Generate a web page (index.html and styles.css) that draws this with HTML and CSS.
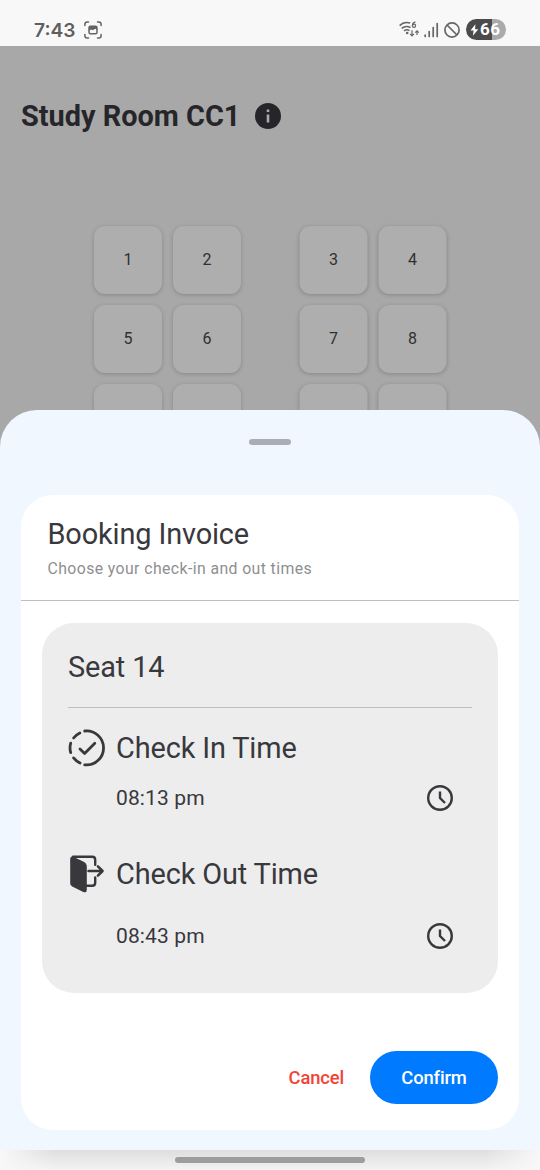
FILE: index.html
```html
<!DOCTYPE html>
<html lang="en">
<head>
<meta charset="utf-8">
<title>Study Room CC1</title>
<link rel="stylesheet" href="styles.css">
</head>
<body>
<div class="phone">
  <header class="status">
    <span class="clock">7:43</span>
    <svg class="shot" width="18" height="18" viewBox="0 0 18 18" fill="none" stroke="#636363" stroke-width="1.5" stroke-linecap="round">
      <path d="M.9 4.4V3.2Q.9.9 3.2.9h1.3M13.5.9h1.3q2.3 0 2.3 2.3v1.2M17.1 13.6v1.2q0 2.3-2.3 2.3h-1.3M4.5 17.1H3.2q-2.3 0-2.3-2.3v-1.2"/>
      <rect x="5" y="5.2" width="8" height="7.6" rx="1.5"/>
      <path d="M5 5.2h8v3.7l-1.8-1.2-2.4 1.6-1.6-.8L5 9.7z" fill="#636363" stroke="none"/>
    </svg>
    <div class="signals">
      <svg width="20" height="17" viewBox="0 0 20 17" fill="none" stroke="#666" stroke-width="1.5">
        <path d="M.6 4.6C3.5 1.7 7.4.8 11.2 2M2.7 7.4c2.7-2.2 5.8-2.5 8.8-.9M5 10c1.8-1.4 3.7-1.5 5.5-.3"/>
        <circle cx="8.2" cy="12" r="1.3" fill="#666" stroke="none"/>
        <path d="M16.4.9c-2.1.7-3 2-3 3.6" stroke-width="1.2"/>
        <circle cx="15" cy="4.7" r="1.6" stroke-width="1.2"/>
        <path d="M13 9.2v5.6m-1.9-1.9 1.9 1.9 1.9-1.9M18 14V9.8m-1.8 1.8L18 9.8l1.8 1.8" stroke-width="1.2"/>
      </svg>
      <svg class="bars" width="15" height="16" viewBox="0 0 15 16" stroke="#666" stroke-width="1.7" stroke-linecap="round">
        <path d="M1.2 13.1v1.4M5.2 9.5v5M9.2 5.6v8.9M13.2 1.5v13"/>
      </svg>
      <svg class="blocked" width="16" height="16" viewBox="0 0 16 16" fill="none" stroke="#666" stroke-width="1.7">
        <circle cx="8" cy="8" r="7.1"/><path d="m3 3 10 10"/>
      </svg>
      <div class="battery">
        <svg width="9" height="12" viewBox="0 0 9 12"><path d="M5.4.2.5 6.6h3.1L2.9 11.8l5.4-6.6H5.1z" fill="#fff"/></svg>
        <span>66</span>
      </div>
    </div>
  </header>

  <main class="room">
    <div class="title">
      <h1>Study Room CC1</h1>
      <svg width="26" height="26" viewBox="0 0 26 26"><circle cx="13" cy="13" r="13" fill="#26262a"/><path d="M11.7 6.5h2.6v2.6h-2.6zM11.7 11.5h2.6v8h-2.6z" fill="#aaa"/></svg>
    </div>
    <div class="seats">
      <div class="seat">1</div><div class="seat">2</div><div class="seat">3</div><div class="seat">4</div>
      <div class="seat">5</div><div class="seat">6</div><div class="seat">7</div><div class="seat">8</div>
      <div class="seat"></div><div class="seat"></div><div class="seat"></div><div class="seat"></div>
    </div>

    <section class="sheet">
      <div class="handle"></div>
      <div class="invoice">
        <div class="invoice-head">
          <h2>Booking Invoice</h2>
          <p>Choose your check-in and out times</p>
        </div>
        <div class="details">
          <h2 class="seat-name">Seat 14</h2>
          <div class="event">
            <svg width="38" height="38" viewBox="0 0 38 38" fill="none" stroke="#38383d" stroke-width="2.8" stroke-linecap="round" stroke-linejoin="round">
              <path d="M16.7 2A17 17 0 1 1 16.7 35.8M12.1 34A17 17 0 0 1 5.6 28.9M2.7 23.6A17 17 0 0 1 2.7 14.2M5.6 9A17 17 0 0 1 11.8 3.9"/>
              <path d="m12 20 4.6 4.5 10.2-10.2"/>
            </svg>
            <h2>Check In Time</h2>
          </div>
          <div class="time first">
            <span>08:13 pm</span>
            <svg width="26" height="26" viewBox="0 0 26 26" fill="none" stroke="#38383d" stroke-width="2.4"><circle cx="13" cy="13" r="11.8"/><path d="M13 6.5V13l5 5"/></svg>
          </div>
          <div class="event out">
            <svg width="38" height="38" viewBox="0 0 38 38" fill="none" stroke="#38383d" stroke-width="2.4" stroke-linecap="round" stroke-linejoin="round">
              <path d="M5 1.7h19.2q3 0 3 3v5M27.2 22.5v5.2q0 3-3 3H17"/>
              <path d="M20.5 16h14M29.9 11.4l4.7 4.6-4.7 4.6" stroke-width="2.5"/>
              <path d="M2.2 4q0-3.4 3-2.3l10 4.8q3.6 1.7 3.6 5v23.1q0 3.8-3.5 2.3L4.2 31.6q-2-1-2-3.4z" fill="#38383d" stroke="none"/>
            </svg>
            <h2>Check Out Time</h2>
          </div>
          <div class="time second">
            <span>08:43 pm</span>
            <svg width="26" height="26" viewBox="0 0 26 26" fill="none" stroke="#38383d" stroke-width="2.4"><circle cx="13" cy="13" r="11.8"/><path d="M13 6.5V13l5 5"/></svg>
          </div>
        </div>
        <div class="actions">
          <button class="cancel">Cancel</button>
          <button class="confirm">Confirm</button>
        </div>
      </div>
    </section>
  </main>
  <footer class="nav"><div class="pill"></div></footer>
</div>
</body>
</html>
```
FILE: styles.css
```css
* { box-sizing: border-box; }
body { margin: 0; font-family: Roboto, sans-serif; color: #38383d; }
h1, h2, p { margin: 0; }
svg { display: block; flex: none; overflow: visible; }
.phone { width: 540px; height: 1170px; overflow: hidden; display: flex; flex-direction: column; background: #f7f7f7; }

.status { height: 46px; flex: none; display: flex; align-items: center; padding: 13px 34px 0; background: #f8f8f8; }
.clock { font: 600 19.2px/24px Inter, sans-serif; color: #5f5f5f; width: 42px; white-space: nowrap; }
.shot { margin-left: 8px; }
.signals { margin-left: auto; display: flex; align-items: center; }
.bars { margin-left: 5px; }
.blocked { margin-left: 5px; }
.battery { width: 40px; height: 21px; margin-left: 6px; border-radius: 11px; padding-left: 4px; display: flex; align-items: center; background: linear-gradient(90deg, #4b4b4b 66%, #aaa 66%); color: #fff; }
.battery span { font: 700 17px/21px Roboto, sans-serif; margin-left: 1px; letter-spacing: .4px; }

.room { position: relative; height: 1104px; flex: none; background: #a8a8a8; }
.title { display: flex; align-items: center; padding: 52px 0 0 21px; height: 87px; gap: 15px; }
h1 { font-size: 28.9px; line-height: 36px; font-weight: 700; color: #26262a; white-space: nowrap; }
.seats { display: grid; grid-template-columns: 68px 68px 68px 68px; column-gap: 11px; row-gap: 11px; padding: 93px 0 0 94px; }
.seat { height: 68px; border-radius: 11px; background: #aeaeae; box-shadow: 0 1px 4px rgba(0,0,0,.2); display: flex; align-items: center; justify-content: center; padding-bottom: 2px; font-size: 16px; color: #303032; }
.seat:nth-child(4n+3), .seat:nth-child(4n+4) { transform: translateX(47.5px); }

.sheet { position: absolute; left: 0; right: 0; top: 364px; bottom: 0; background: #f0f7ff; border-radius: 37px 37px 0 0; padding: 29px 21px 20.5px; display: flex; flex-direction: column; }
.handle { width: 42px; height: 5.5px; border-radius: 3px; background: #aaadb7; align-self: center; flex: none; }
.invoice { margin-top: 50px; flex: 1; border-radius: 32px; background: #fff; display: flex; flex-direction: column; }
.invoice-head { height: 106.5px; padding: 21.5px 26.5px 0; border-bottom: 1.3px solid #bfbfc1; }
h2 { font-size: 28.9px; line-height: 37px; font-weight: 400; letter-spacing: -.13px; white-space: nowrap; }
.invoice-head p { font-size: 15.8px; line-height: 21px; letter-spacing: .41px; color: #8f8f91; margin-top: 5px; white-space: nowrap; }
.details { margin: 22px 21px 0; height: 370px; border-radius: 32px; background: #ededed; padding: 26px 26px 0; }
.seat-name { height: 59px; border-bottom: 1px solid #bdbec4; }
.event { display: flex; align-items: center; height: 38px; margin-top: 21px; gap: 10px; }
.time { display: flex; align-items: center; justify-content: space-between; height: 26px; padding: 0 19px 0 48px; font-size: 21px; letter-spacing: .12px; }
.first { margin-top: 18px; }
.event.out { margin-top: 44px; }
.second { margin-top: 29.5px; }
.actions { display: flex; justify-content: flex-end; align-items: center; padding-right: 21px; margin-top: 57.5px; gap: 26px; }
button { border: 0; padding: 0; font: 500 18.4px Roboto, sans-serif; letter-spacing: -.15px; }
.cancel { background: none; color: #f44336; }
.confirm { width: 128px; height: 53px; border-radius: 27px; color: #fff; background: #007aff; }

.nav { height: 20px; padding-top: 7px; display: flex; justify-content: center; align-items: flex-start; background: linear-gradient(90deg, #f8f8f8 0, rgba(248,248,248,0) 55px, rgba(248,248,248,0) 485px, #f8f8f8 540px), linear-gradient(#dedede, #f3f3f3); }
.pill { width: 190px; height: 6px; border-radius: 3px; background: #9d9d9d; }
```
